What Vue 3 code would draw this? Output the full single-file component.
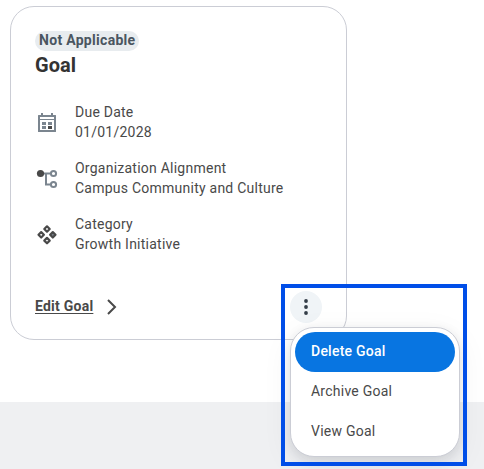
<script setup>
const details = [
  { icon: 'calendar', label: 'Due Date', value: '01/01/2028' },
  { icon: 'org', label: 'Organization Alignment', value: 'Campus Community and Culture' },
  { icon: 'category', label: 'Category', value: 'Growth Initiative' }
]
const actions = ['Delete Goal', 'Archive Goal', 'View Goal']
</script>

<template>
  <main class="page">
    <section class="content">
      <article class="card">
        <header class="head">
          <span class="badge">Not Applicable</span>
          <h2 class="title">Goal</h2>
        </header>
        <dl class="details">
          <div v-for="d in details" :key="d.label" class="detail">
            <svg class="icon" viewBox="0 0 24 24" width="24" height="24" aria-hidden="true">
              <g v-if="d.icon === 'calendar'">
                <path fill="#7b858f" fill-rule="evenodd" d="M6 3h2v2h8V3h2v2h2.500a.5.5 0 0 1 .5.5v16a.5.5 0 0 1-.5.5h-17a.5.5 0 0 1-.5-.5v-16a.5.5 0 0 1 .5-.5H6zM5 7v2h14V7zM5 10v10h14V10z" />
                <path fill="#7b858f" d="M7 12h4v3H7zM13 12h4v3h-4zM7 16h4v3H7z" />
                <path fill="#494949" d="M13 16h4v3h-4z" />
              </g>
              <g v-else-if="d.icon === 'org'" fill="none" stroke="#7b858f" stroke-width="2">
                <path d="M8 7.500h7M11 7.500v11h4" />
                <circle cx="18.500" cy="7.500" r="2.600" />
                <circle cx="18.500" cy="18.500" r="2.600" />
                <circle cx="5.500" cy="7.500" r="3.600" fill="#494949" stroke="none" />
              </g>
              <g v-else fill="none" stroke="#494949" stroke-width="2.200" stroke-linejoin="round">
                <path d="M12 4.300l2.700 2.700-2.700 2.700-2.700-2.700zM6.200 10.100l2.700 2.700-2.700 2.700-2.700-2.700zM12 15.900l2.700 2.700-2.700 2.700-2.700-2.700z" />
                <path fill="#7b858f" d="M17.800 10.100l2.700 2.700-2.700 2.700-2.700-2.700z" />
              </g>
            </svg>
            <div class="copy">
              <dt>{{ d.label }}</dt>
              <dd>{{ d.value }}</dd>
            </div>
          </div>
        </dl>
        <footer class="foot">
          <a class="edit">Edit Goal</a>
          <svg class="chevron" viewBox="0 0 12 18" width="12" height="18" aria-hidden="true">
            <path d="M2 2l7 7-7 7" fill="none" stroke="#494949" stroke-width="2" />
          </svg>
          <button class="more" aria-label="More actions">
            <svg viewBox="0 0 32 32" width="32" height="32" fill="#333d47">
              <circle cx="16" cy="10" r="1.900" />
              <circle cx="16" cy="16" r="1.900" />
              <circle cx="16" cy="22" r="1.900" />
            </svg>
          </button>
        </footer>
      </article>
    </section>
    <ul class="menu">
      <li v-for="(a, i) in actions" :key="a" :class="['item', { active: i === 0 }]">{{ a }}</li>
    </ul>
    <div class="highlight"></div>
  </main>
</template>

<style>
body {
  margin: 0;
}
</style>

<style scoped>
* {
  box-sizing: border-box;
}
.page {
  position: relative;
  width: 484px;
  height: 469px;
  overflow: hidden;
  background: #eff0f2;
  color: #494949;
  font: 400 14px/20px Roboto, sans-serif;
  letter-spacing: 0.24px;
}
.content {
  height: 402px;
  padding: 6px 0 0 10px;
  background: #fff;
}
.card {
  display: flex;
  flex-direction: column;
  width: 337px;
  height: 334px;
  padding: 24px;
  border: 1px solid #cbcdd5;
  border-radius: 24px;
}
.head {
  display: flex;
  flex-direction: column;
  align-items: flex-start;
}
.badge {
  height: 20px;
  padding: 0 4px;
  border-radius: 10px;
  background: #e8ecef;
  color: #4a5560;
  font-weight: 700;
  line-height: 18px;
  letter-spacing: 0.3px;
}
.title {
  margin: 0;
  color: #333;
  font-size: 20px;
  font-weight: 700;
  line-height: 28px;
  letter-spacing: 0;
}
.details {
  display: flex;
  flex-direction: column;
  gap: 16px;
  margin: 23px 0 0;
}
.detail {
  display: flex;
  align-items: center;
  gap: 16px;
}
dd {
  margin: 0;
}
.foot {
  display: flex;
  align-items: center;
  height: 32px;
  margin-top: 37px;
}
.edit {
  font-weight: 700;
  line-height: 18px;
  margin-bottom: 2px;
  text-decoration: underline;
  text-underline-offset: 2px;
}
.chevron {
  margin-left: 13px;
}
.more {
  display: flex;
  width: 32px;
  height: 32px;
  margin: 0 0 0 auto;
  padding: 0;
  border: 0;
  border-radius: 50%;
  background: #f0f4f7;
}
.menu {
  position: absolute;
  left: 290px;
  top: 327px;
  width: 170px;
  margin: 0;
  padding: 4px;
  list-style: none;
  border: 1px solid #cbcdd5;
  border-radius: 24px;
  background: #fff;
  box-shadow: 0 4px 12px rgba(31, 38, 46, 0.12), 0 8px 32px rgba(31, 38, 46, 0.06);
}
.item {
  padding: 9px 16px 11px;
  border-radius: 20px;
}
.active {
  background: #0875e1;
  color: #fff;
  font-weight: 500;
}
.highlight {
  position: absolute;
  left: 281px;
  top: 284px;
  width: 186px;
  height: 182px;
  border: 4px solid #004ee8;
}
</style>
